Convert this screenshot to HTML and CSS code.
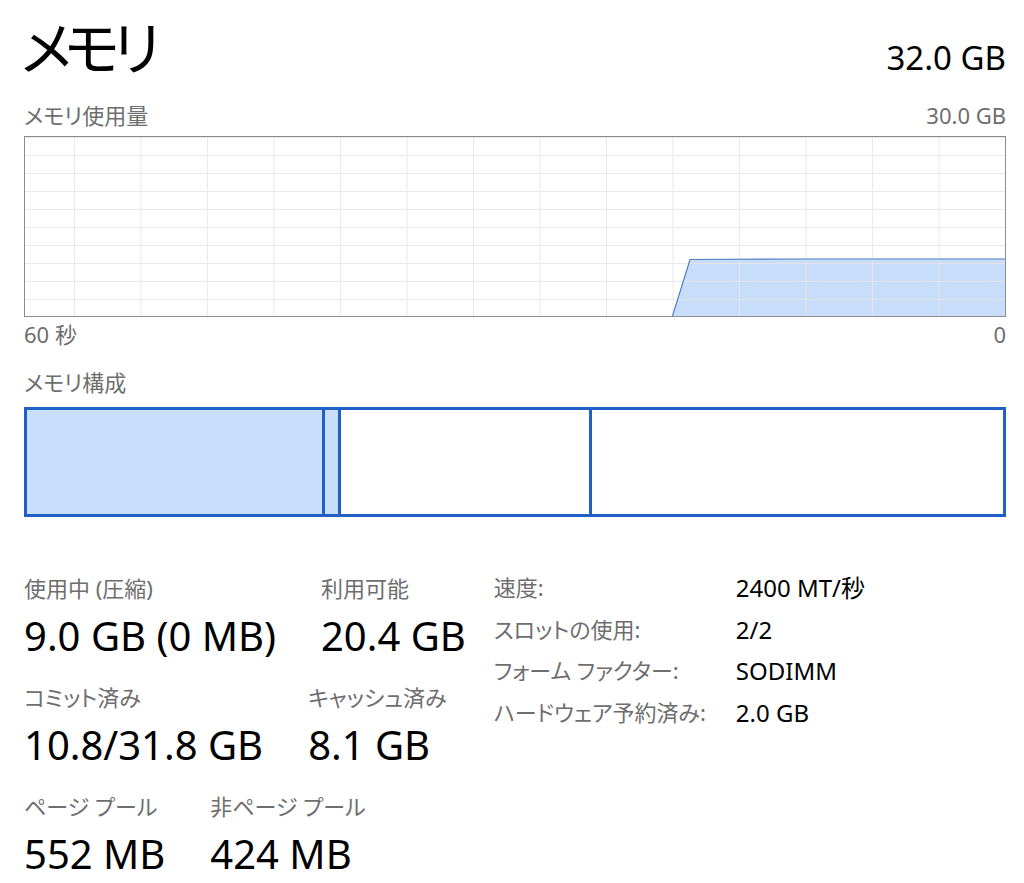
FILE: index.html
```html
<!DOCTYPE html>
<html lang="ja">
<head>
<meta charset="utf-8">
<title>メモリ</title>
<link rel="stylesheet" href="styles.css">
</head>
<body>
<main class="panel">
  <header class="head">
    <h1 class="title">メモリ</h1>
    <div class="total">32.0 GB</div>
  </header>

  <div class="caption-row">
    <span>メモリ使用量</span>
    <span>30.0 GB</span>
  </div>

  <div class="graph">
    <svg class="graph-svg" width="980" height="179" viewBox="0 0 980 179">
      <defs>
        <pattern id="grid" patternUnits="userSpaceOnUse" x="49" y="0" width="66.5" height="18">
          <path d="M0.5 0 V18 M0 0.5 H66.5" fill="none" stroke="#e6e6e6" stroke-width="1"/>
        </pattern>
      </defs>
      <polygon points="647.5,179 665,122.5 781,122 980,122 980,179" fill="#c8ddf9"/>
      <rect x="0" y="0" width="980" height="179" fill="url(#grid)" opacity="0.9"/>
      <polyline points="647.5,179 665,122.5 781,122 980,122" fill="none" stroke="#4f7fc2" stroke-width="1.2"/>
    </svg>
  </div>

  <div class="axis">
    <span>60 秒</span>
    <span>0</span>
  </div>

  <div class="caption">メモリ構成</div>

  <div class="composition">
    <div class="seg seg-used"></div>
    <div class="seg seg-modified"></div>
    <div class="seg seg-standby"></div>
    <div class="seg seg-free"></div>
  </div>

  <section class="stats">
    <div class="stats-main">
      <div class="stat-row">
        <div class="stat">
          <div class="label">使用中 (圧縮)</div>
          <div class="value">9.0 GB (0 MB)</div>
        </div>
        <div class="stat">
          <div class="label">利用可能</div>
          <div class="value">20.4 GB</div>
        </div>
      </div>
      <div class="stat-row">
        <div class="stat">
          <div class="label">コミット済み</div>
          <div class="value">10.8/31.8 GB</div>
        </div>
        <div class="stat">
          <div class="label">キャッシュ済み</div>
          <div class="value">8.1 GB</div>
        </div>
      </div>
      <div class="stat-row">
        <div class="stat">
          <div class="label">ページ プール</div>
          <div class="value">552 MB</div>
        </div>
        <div class="stat">
          <div class="label">非ページ プール</div>
          <div class="value">424 MB</div>
        </div>
      </div>
    </div>

    <dl class="info">
      <dt>速度:</dt><dd>2400 MT/秒</dd>
      <dt>スロットの使用:</dt><dd>2/2</dd>
      <dt>フォーム ファクター:</dt><dd>SODIMM</dd>
      <dt>ハードウェア予約済み:</dt><dd>2.0 GB</dd>
    </dl>
  </section>
</main>
</body>
</html>
```

FILE: styles.css
```css
* {
  box-sizing: border-box;
}

html, body {
  margin: 0;
  padding: 0;
  background: #ffffff;
}

body {
  font-family: "Noto Sans", "Noto Sans CJK JP", sans-serif;
  font-feature-settings: "palt";
  color: #000000;
}

.panel {
  width: 1024px;
  padding: 0 18px 0 24px;
}

.head {
  display: flex;
  justify-content: space-between;
  align-items: baseline;
  height: 102px;
}

.title {
  margin: 8px 0 0 -3px;
  font-size: 58px;
  font-weight: 400;
  line-height: 80px;
  letter-spacing: -7px;
}

.total {
  font-size: 33px;
  line-height: 40px;
}

.caption-row,
.axis {
  display: flex;
  justify-content: space-between;
  font-size: 22px;
  line-height: 26px;
  color: #6e6e6e;
}

.graph {
  margin-top: 8px;
  width: 982px;
  height: 181px;
  border: 1px solid #8c8c8c;
}

.graph-svg {
  display: block;
}

.axis {
  margin-top: 4px;
}

.caption {
  margin-top: 22px;
  font-size: 22px;
  line-height: 26px;
  color: #6e6e6e;
}

.composition {
  margin-top: 12px;
  width: 982px;
  height: 110px;
  display: flex;
  border: 3px solid #1f5fc6;
}

.seg {
  height: 100%;
}

.seg + .seg {
  border-left: 3px solid #1f5fc6;
}

.seg-used {
  flex: 0 0 295px;
  background: #c9defa;
}

.seg-modified {
  flex: 0 0 16px;
  background: #c9defa;
}

.seg-standby {
  flex: 0 0 251px;
}

.seg-free {
  flex: 1 1 auto;
}

.stats {
  margin-top: 50px;
  display: flex;
  gap: 28px;
  align-items: flex-start;
}

.stats-main {
  padding-top: 8px;
  display: flex;
  flex-direction: column;
  gap: 24px;
}

.stat-row {
  display: flex;
  gap: 45px;
}

.label {
  font-size: 22px;
  line-height: 26px;
  color: #6e6e6e;
  white-space: nowrap;
}

.value {
  margin-top: 11px;
  font-size: 40px;
  line-height: 48px;
  white-space: nowrap;
}

.info {
  margin: 0;
  display: grid;
  grid-template-columns: 242px auto;
  grid-auto-rows: 41.5px;
  font-size: 22px;
  line-height: 41.5px;
}

.info dt {
  color: #6e6e6e;
  white-space: nowrap;
}

.info dd {
  margin: 0;
  font-size: 24px;
  white-space: nowrap;
}
```
